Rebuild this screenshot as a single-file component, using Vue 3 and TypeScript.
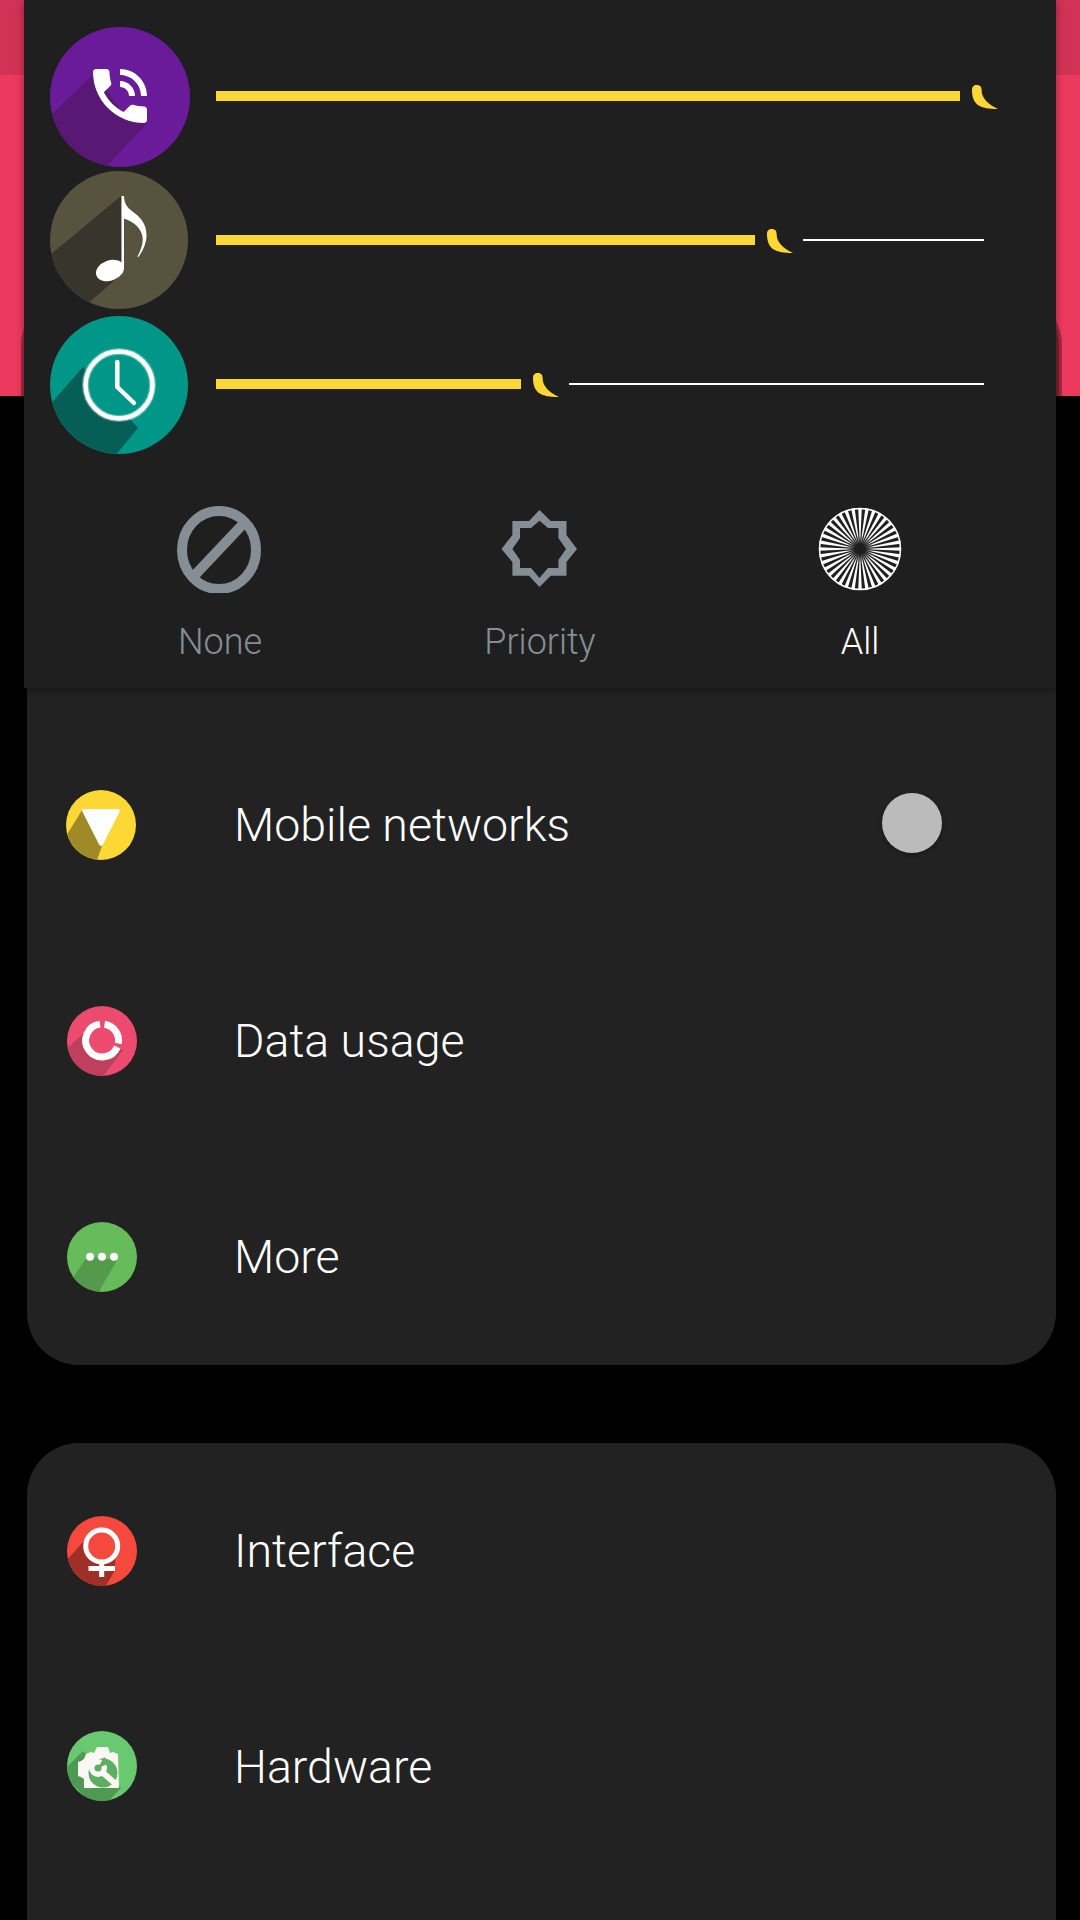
<script setup lang="ts">
interface Row { label: string; icon: string }
const firstRows: Row[] = [
  { label: 'Mobile networks', icon: 'mobile' },
  { label: 'Data usage', icon: 'data' },
  { label: 'More', icon: 'more' },
]
const secondRows: Row[] = [
  { label: 'Interface', icon: 'interface' },
  { label: 'Hardware', icon: 'hardware' },
]
const sliders = [
  { icon: 'call', fill: 744, rest: 0 },
  { icon: 'music', fill: 539, rest: 181 },
  { icon: 'clock', fill: 305, rest: 415 },
]
const spokeCount = 36
const spokes = Array.from({ length: spokeCount }, (_, i) => {
  const a = (i / spokeCount) * Math.PI * 2
  const d = (Math.PI / spokeCount) * 0.5
  const r = 41
  const p1 = `${(r * Math.sin(a - d)).toFixed(2)},${(-r * Math.cos(a - d)).toFixed(2)}`
  const p2 = `${(r * Math.sin(a + d)).toFixed(2)},${(-r * Math.cos(a + d)).toFixed(2)}`
  return `0,0 ${p1} ${p2}`
})
</script>

<template>
  <div class="page">
    <header class="hero"><div class="status"></div></header>

    <section class="card card-first">
      <div v-for="row in firstRows" :key="row.label" class="row">
        <svg class="row-icon" viewBox="0 0 70 70">
          <defs><clipPath :id="'c-' + row.icon"><circle cx="35" cy="35" r="35" /></clipPath></defs>
          <g v-if="row.icon === 'mobile'" transform="translate(-1 0)">
            <circle cx="35" cy="35" r="35" fill="#fdd835" />
            <polygon clip-path="url(#c-mobile)" points="16,20 -6,56 26,84 36,56" fill="#a08a28" />
            <path d="M18 19h34c1.600 0 2.400 1.300 1.700 2.600L37 54.400c-.9 1.700-3 1.700-3.900 0L16.300 21.600c-.7-1.300.1-2.600 1.700-2.600z" fill="#fff" />
          </g>
          <template v-else-if="row.icon === 'data'">
            <circle cx="35" cy="35" r="35" fill="#ec4a6e" />
            <polygon clip-path="url(#c-data)" points="17,27 -6,48 27,82 56,44" fill="#bf3f5e" />
            <circle cx="35" cy="35" r="17" fill="#ec4a6e" />
            <path d="M33 18.100A16.500 16.500 0 1 0 50.300 41" fill="none" stroke="#fff" stroke-width="7" />
            <path d="M37.500 18.200A16.500 16.500 0 0 1 51.300 37.500" fill="none" stroke="#fff" stroke-width="7" />
          </template>
          <template v-else-if="row.icon === 'more'">
            <circle cx="35" cy="35" r="35" fill="#66bb5a" />
            <polygon clip-path="url(#c-more)" points="20,35 -8,76 26,80 50,38" fill="#55994d" />
            <circle cx="23" cy="34.700" r="4" fill="#fff" />
            <circle cx="35" cy="34.700" r="4" fill="#fff" />
            <circle cx="47" cy="34.700" r="4" fill="#fff" />
          </template>
        </svg>
        <span class="row-label">{{ row.label }}</span>
        <span v-if="row.icon === 'mobile'" class="toggle"></span>
      </div>
    </section>

    <section class="card card-second">
      <div v-for="row in secondRows" :key="row.label" class="row">
        <svg class="row-icon" viewBox="0 0 70 70">
          <defs><clipPath :id="'c-' + row.icon"><circle cx="35" cy="35" r="35" /></clipPath></defs>
          <template v-if="row.icon === 'interface'">
            <circle cx="35" cy="35" r="35" fill="#f6493e" />
            <polygon clip-path="url(#c-interface)" points="16,26 -10,55 30,85 47,56 50,30" fill="#9e3027" />
            <circle cx="34.700" cy="30" r="16" fill="#f6493e" />
            <circle cx="34.700" cy="30" r="16" fill="none" stroke="#fff" stroke-width="5" />
            <path d="M34.700 46v15M21.500 52.500h26.500" fill="none" stroke="#fff" stroke-width="5" />
          </template>
          <g v-else transform="translate(0 -1)">
            <circle cx="35" cy="35" r="35" fill="#69c96e" />
            <polygon clip-path="url(#c-hardware)" points="16,20 -6,42 32,80 54,57" fill="#4f9a53" />
            <path d="M19 23l5-2 3 1 3-6h11l2 6 3-1 5 2 1 34H17v-9l-3-2-3-1V31l3-1 3-2z" fill="#faf7f5" />
            <circle cx="36" cy="42" r="14.500" fill="#5cae60" />
            <circle cx="31" cy="37" r="9" fill="#faf7f5" />
            <circle cx="31" cy="37" r="3.500" fill="#5cae60" />
            <polygon points="31,37 37,26 43,32" fill="#5cae60" />
            <path d="M35 41l15 13" stroke="#faf7f5" stroke-width="6" fill="none" />
          </g>
        </svg>
        <span class="row-label">{{ row.label }}</span>
      </div>
    </section>

    <aside class="panel">
      <div class="slider" v-for="s in sliders" :key="s.icon" :class="'slider-' + s.icon">
        <svg v-if="s.icon === 'call'" class="app-icon" viewBox="0 0 140 140">
          <defs><clipPath id="c-call"><circle cx="70" cy="71" r="70" /></clipPath></defs>
          <circle cx="70" cy="71" r="70" fill="#6a1b9a" />
          <polygon clip-path="url(#c-call)" points="43,49 -17,106 37,161 97,97 72,86 55,62" fill="#581874" />
          <path transform="translate(34 34) scale(3)" d="M20 15.500c-1.250 0-2.450-.2-3.570-.57-.35-.11-.74-.03-1.020.24l-2.200 2.200c-2.830-1.440-5.150-3.750-6.590-6.590l2.200-2.210c.28-.26.36-.65.25-1C8.700 6.450 8.500 5.250 8.500 4c0-.55-.45-1-1-1H4c-.55 0-1 .45-1 1 0 9.390 7.610 17 17 17 .55 0 1-.45 1-1v-3.500c0-.55-.45-1-1-1zM19 12h2c0-4.970-4.030-9-9-9v2c3.870 0 7 3.130 7 7zm-4 0h2c0-2.760-2.240-5-5-5v2c1.660 0 3 1.340 3 3z" fill="#fff" />
        </svg>
        <svg v-else-if="s.icon === 'music'" class="app-icon" viewBox="0 0 140 140">
          <defs><clipPath id="c-music"><circle cx="69" cy="70" r="69" /></clipPath></defs>
          <circle cx="69" cy="70" r="69" fill="#58533f" />
          <polygon clip-path="url(#c-music)" points="71,26 -6,90 30,140 72,104" fill="#38352c" />
          <ellipse cx="60" cy="100.500" rx="14.500" ry="10" transform="rotate(-20 60 100.500)" fill="#fff" />
          <path d="M71.500 26H74c.2 7 2.500 11 8.500 15.500 8 6 14 12 14 24 0 8-4 16-8 21.500l-1-.5c3-6 6-13 5-19.500-1-8-8-15-18.500-18.500V98h-2.500z" fill="#fff" />
        </svg>
        <svg v-else class="app-icon" viewBox="0 0 140 140">
          <defs><clipPath id="c-clock"><circle cx="69" cy="71" r="69" /></clipPath></defs>
          <circle cx="69" cy="71" r="69" fill="#009688" />
          <polygon clip-path="url(#c-clock)" points="33,53 -8,100 50,160 88,114" fill="#055f57" />
          <circle cx="69" cy="71" r="33.500" fill="#009688" />
          <circle cx="69" cy="71" r="33.500" fill="none" stroke="#fff" stroke-opacity=".35" stroke-width="7" />
          <circle cx="69" cy="71" r="33.500" fill="none" stroke="#fff" stroke-width="4.500" />
          <path d="M67.300 48v25l16.700 16" fill="none" stroke="#fff" stroke-width="4.500" stroke-linecap="round" stroke-linejoin="round" />
        </svg>
        <div class="track">
          <div class="fill" :style="{ width: s.fill + 'px' }"></div>
          <svg class="thumb" viewBox="0 0 26 24"><path d="M0 5C0 1.500 2 0 4.500 0 8 0 9.700 1.500 9.700 6 9.700 12 15 19 26 24 8 24 0 20 0 5z" fill="#fdd835" /></svg>
          <div v-if="s.rest" class="rest" :style="{ width: s.rest + 'px' }"></div>
        </div>
      </div>

      <div class="modes">
        <div class="mode mode-none">
          <svg class="mode-icon" viewBox="0 0 88 88">
            <ellipse cx="43" cy="45" rx="37" ry="39" fill="none" stroke="#858e94" stroke-width="10" />
            <path d="M69 17L18 71" stroke="#858e94" stroke-width="10" />
          </svg>
          <span>None</span>
        </div>
        <div class="mode mode-priority">
          <svg class="mode-icon" viewBox="496 505 88 88">
            <path fill-rule="evenodd" fill="#858e94" d="M512.400 521H529L539.500 510 550.700 521H566.500V535L577 549 566.500 562V575.700H550.700L539.500 587 529 575.700H512.400V562L501.500 549 512.400 535ZM520 528V538L512.400 549 520 560V568H531L539.500 578 548 568H558.400V560L566 549 558.400 538V528H548L539.500 520.700 531 528Z" />
          </svg>
          <span>Priority</span>
        </div>
        <div class="mode mode-all">
          <svg class="mode-icon" viewBox="-44 -44 88 88">
            <defs>
              <radialGradient id="hub"><stop offset="0" stop-color="#1f1f1f" /><stop offset=".35" stop-color="#1f1f1f" /><stop offset="1" stop-color="#1f1f1f" stop-opacity="0" /></radialGradient>
            </defs>
            <polygon v-for="(pts, i) in spokes" :key="i" :points="pts" fill="#fff" />
            <circle r="40.500" fill="none" stroke="#fff" stroke-width="1.500" />
            <circle r="14" fill="url(#hub)" />
          </svg>
          <span>All</span>
        </div>
      </div>
    </aside>
  </div>
</template>

<style scoped>
.page {
  position: relative;
  width: 1080px;
  height: 1920px;
  overflow: hidden;
  background: #000;
  font-family: Roboto, "Liberation Sans", sans-serif;
}
.hero {
  height: 396px;
  background: #ec3a5e;
}
.status {
  height: 75px;
  background: #d23256;
}
.card {
  margin-left: 27px;
  width: 1029px;
  background: #222;
}
.card-first {
  margin-top: -102px;
  padding-top: 423px;
  border-radius: 52px;
  box-shadow: 0 0 0 3px rgba(0, 0, 0, 0.25), 0 0 0 6px rgba(0, 0, 0, 0.3);
}
.card-second {
  margin-top: 78px;
  border-radius: 52px 52px 0 0;
  height: 600px;
}
.row {
  display: flex;
  align-items: center;
  height: 216px;
  padding-left: 40px;
}
.row-icon {
  width: 70px;
  height: 70px;
  flex: none;
  overflow: visible;
}
.row-label {
  margin-left: 97px;
  color: #fff;
  font-size: 46.5px;
  font-weight: 300;
}
.toggle {
  width: 60px;
  height: 60px;
  margin-left: auto;
  margin-right: 114px;
  margin-bottom: 4px;
  border-radius: 50%;
  background: #bbb;
  box-shadow: 0 2px 4px rgba(0, 0, 0, 0.3);
}
.panel {
  position: absolute;
  left: 24px;
  top: 0;
  width: 1032px;
  height: 688px;
  background: #1f1f1f;
  box-shadow: 0 2px 8px rgba(0, 0, 0, 0.35);
}
.slider {
  position: absolute;
  left: 26px;
  display: flex;
  align-items: center;
}
.slider-call { top: 26px; }
.slider-music { top: 170px; }
.slider-clock { top: 314px; }
.app-icon {
  width: 140px;
  height: 140px;
  flex: none;
  overflow: visible;
}
.track {
  display: flex;
  align-items: center;
  margin-left: 26px;
}
.fill {
  height: 10px;
  background: #fdd835;
}
.thumb {
  width: 26px;
  height: 24px;
  margin: 2px 0 0 12px;
}
.rest {
  height: 2px;
  margin-left: 10px;
  background: #fff;
}
.modes {
  position: absolute;
  left: 0;
  right: 0;
  top: 505px;
}
.mode {
  position: absolute;
  top: 0;
  width: 200px;
  display: flex;
  flex-direction: column;
  align-items: center;
  color: #858e94;
  font-size: 36px;
  font-weight: 300;
  padding-top: 0;
}
.mode-none { left: 96px; }
.mode-priority { left: 416px; }
.mode-all { left: 736px; color: #fff; }
.mode-icon {
  width: 88px;
  height: 88px;
  margin-bottom: 28px;
}
</style>
